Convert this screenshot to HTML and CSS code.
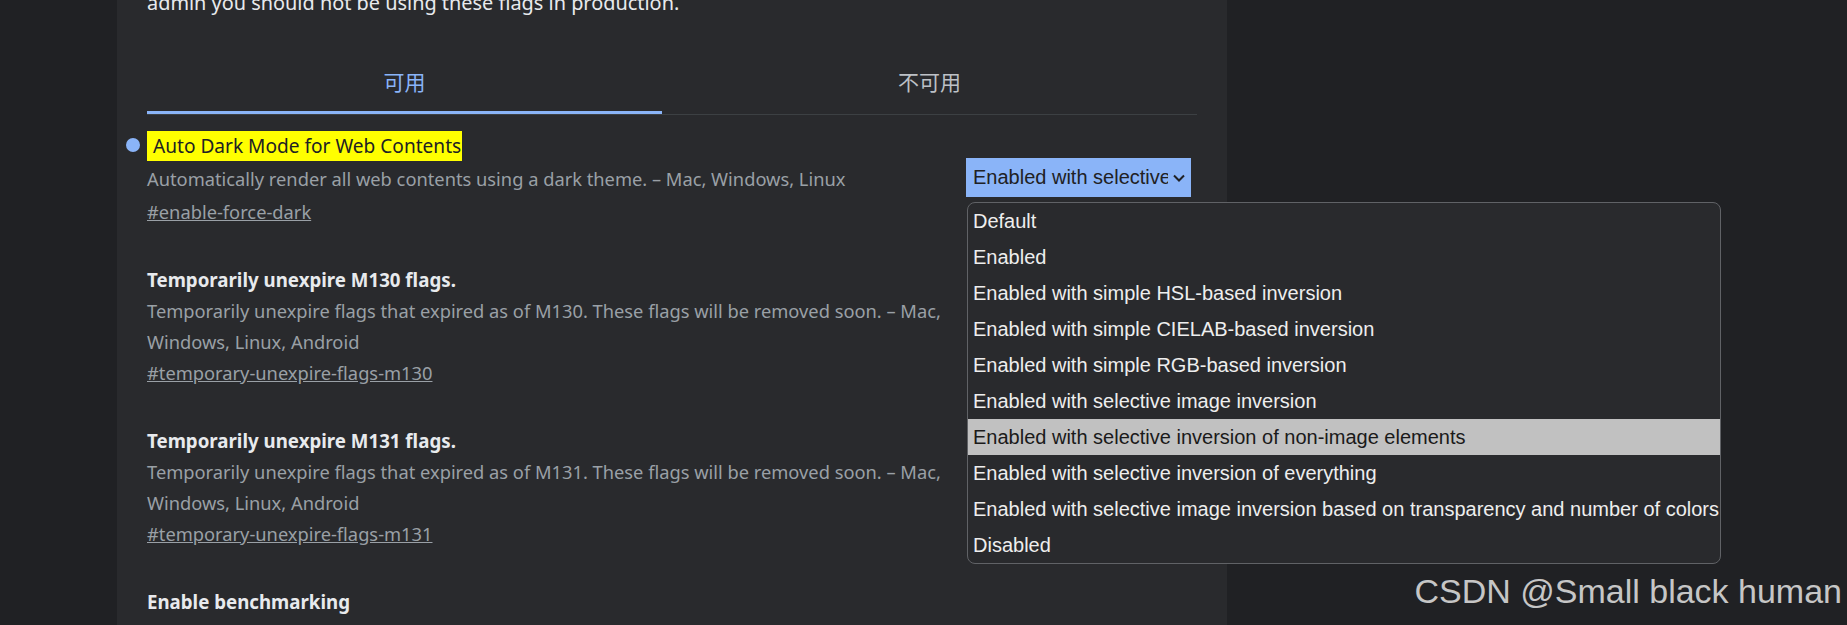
FILE: index.html
```html
<!DOCTYPE html>
<html lang="zh">
<head>
    <meta charset="UTF-8">
    <meta name="viewport" content="width=device-width, initial-scale=1.0">
    <title>Experiments</title>
    <link rel="stylesheet" href="styles.css">
</head>
<body>

    <div class="page">
        <div class="sidebar"></div>

        <div class="main">
            <p class="warning">admin you should not be using these flags in production.</p>

            <div class="tabs">
                <div class="tab tab-available">可用</div>
                <div class="tab tab-unavailable">不可用</div>
            </div>

            <div class="flags">
                <div class="flag matched">
                    <div class="flag-text">
                        <h3 class="flag-name"><span class="dot"></span><mark>Auto Dark Mode for Web Contents</mark></h3>
                        <p class="flag-desc">Automatically render all web contents using a dark theme. – Mac, Windows, Linux</p>
                        <a class="flag-link" href="#enable-force-dark">#enable-force-dark</a>
                    </div>
                    <div class="flag-control">
                        <div class="select open">
                            <span class="select-value">Enabled with selective inversion of non-image elements</span>
                            <svg class="chevron" width="12" height="8" viewBox="0 0 12 8"><path d="M1 1.5l5 5 5-5" fill="none" stroke="#202124" stroke-width="2"/></svg>
                        </div>
                        <ul class="popup">
                            <li>Default</li>
                            <li>Enabled</li>
                            <li>Enabled with simple HSL-based inversion</li>
                            <li>Enabled with simple CIELAB-based inversion</li>
                            <li>Enabled with simple RGB-based inversion</li>
                            <li>Enabled with selective image inversion</li>
                            <li class="hover">Enabled with selective inversion of non-image elements</li>
                            <li>Enabled with selective inversion of everything</li>
                            <li>Enabled with selective image inversion based on transparency and number of colors</li>
                            <li>Disabled</li>
                        </ul>
                    </div>
                </div>

                <div class="flag">
                    <div class="flag-text">
                        <h3 class="flag-name">Temporarily unexpire M130 flags.</h3>
                        <p class="flag-desc">Temporarily unexpire flags that expired as of M130. These flags will be removed soon. – Mac, Windows, Linux, Android</p>
                        <a class="flag-link" href="#temporary-unexpire-flags-m130">#temporary-unexpire-flags-m130</a>
                    </div>
                    <div class="flag-control"></div>
                </div>

                <div class="flag">
                    <div class="flag-text">
                        <h3 class="flag-name">Temporarily unexpire M131 flags.</h3>
                        <p class="flag-desc">Temporarily unexpire flags that expired as of M131. These flags will be removed soon. – Mac, Windows, Linux, Android</p>
                        <a class="flag-link" href="#temporary-unexpire-flags-m131">#temporary-unexpire-flags-m131</a>
                    </div>
                    <div class="flag-control"></div>
                </div>

                <div class="flag">
                    <div class="flag-text">
                        <h3 class="flag-name">Enable benchmarking</h3>
                    </div>
                </div>
            </div>
        </div>
    </div>

    <div class="watermark">CSDN @Small black human</div>

</body>
</html>
```

FILE: styles.css
```css
body {
    margin: 0;
    height: 625px;
    overflow: hidden;
    background-color: #202124;
    font-family: "Noto Sans", sans-serif;
}
.page {
    display: flex;
    min-height: 625px;
}
.sidebar {
    flex: none;
    width: 117px;
    background-color: #202124;
}
.main {
    flex: none;
    width: 1050px;
    padding: 0 30px;
    background-color: #292a2d;
}
.warning {
    margin: -11px 0 0;
    font-size: 19.9px;
    line-height: 28px;
    color: #e8eaed;
}
.tabs {
    display: flex;
    margin-top: 33px;
    border-bottom: 1px solid #3c4043;
}
.tab {
    height: 61px;
    display: flex;
    align-items: center;
    justify-content: center;
    border-bottom: 3px solid transparent;
    font-family: "Noto Sans CJK SC", sans-serif;
    font-size: 21px;
    color: #bdc1c6;
}
.tab-available {
    width: 515px;
    color: #8ab4f8;
    border-bottom-color: #8ab4f8;
}
.tab-unavailable {
    flex: 1;
}
.flags {
    padding-top: 15px;
}
.flag {
    display: flex;
    gap: 10px;
    margin-bottom: 37px;
}
.flag-text {
    flex: 1;
    min-width: 0;
}
.flag-name {
    position: relative;
    margin: 0;
    font-size: 18.7px;
    font-weight: 700;
    line-height: 31px;
    color: #e8eaed;
}
.flag-name mark {
    display: inline-block;
    padding: 0 1px 0 6px;
    line-height: 30px;
    font-size: 19.1px;
    font-weight: 400;
    color: #202124;
    background-color: #ffff00;
}
.dot {
    position: absolute;
    left: -21px;
    top: 8px;
    width: 14px;
    height: 14px;
    border-radius: 50%;
    background-color: #8ab4f8;
}
.flag-desc {
    margin: 0;
    font-size: 18.3px;
    line-height: 31px;
    color: #9aa0a6;
}
.flag-link {
    display: block;
    width: fit-content;
    font-size: 18.3px;
    line-height: 31px;
    color: #9aa0a6;
}
.flag.matched .flag-desc,
.flag.matched .flag-link {
    margin-top: 2px;
}
.flag-control {
    position: relative;
    flex: none;
    width: 225px;
    margin: 28px 6px 0 0;
}
.select {
    display: flex;
    align-items: center;
    gap: 5px;
    height: 39px;
    padding: 0 6px 0 7px;
    box-sizing: border-box;
    font-family: "Liberation Sans", Arial, sans-serif;
    font-size: 20px;
    color: #e8eaed;
    background-color: #3c4043;
}
.select.open {
    color: #202124;
    background-color: #8ab4f8;
}
.select-value {
    flex: 1;
    overflow: hidden;
    white-space: nowrap;
}
.chevron {
    flex: none;
}
.popup {
    position: absolute;
    top: 44px;
    left: 1px;
    z-index: 2;
    width: 754px;
    box-sizing: border-box;
    margin: 0;
    padding: 0;
    list-style-type: none;
    overflow: hidden;
    font-family: "Liberation Sans", Arial, sans-serif;
    font-size: 20px;
    color: #eeeeee;
    background-color: #292a2d;
    border: 1px solid #606266;
    border-radius: 8px;
}
.popup li {
    height: 36px;
    line-height: 36px;
    padding-left: 5px;
    white-space: nowrap;
}
.popup li.hover {
    color: #1a1a1a;
    background-color: #c1c1c1;
}
.watermark {
    position: absolute;
    right: 5px;
    top: 574px;
    font-family: "Liberation Sans", Arial, sans-serif;
    font-size: 34px;
    line-height: 1;
    color: #c6c6c6;
}
```
